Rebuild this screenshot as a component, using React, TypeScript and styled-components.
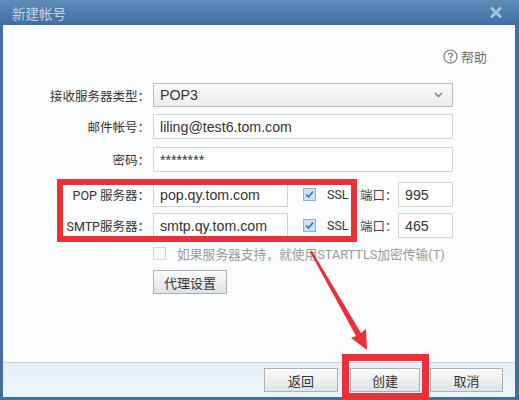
import * as React from "react";
import styled, {createGlobalStyle} from "styled-components";

const GlobalStyle = createGlobalStyle`
  html, body {
    margin: 0;
    padding: 0;
    background: #3f6d9b;
  }
  body {
    font-family: Roboto, "Noto Sans CJK SC", sans-serif;
  }
`;

const Window = styled.div`
  position: relative;
  width: 519px;
  height: 400px;
  overflow: hidden;
  display: flex;
  flex-direction: column;
  padding: 0 4px 3px 3px;
  box-sizing: border-box;
  background: #41709f;
`;

const TitleBar = styled.div`
  flex: 0 0 25px;
  margin: 0 -4px 0 -3px;
  padding: 0 17px 0 12px;
  display: flex;
  align-items: center;
  justify-content: space-between;
  background: linear-gradient(#5f8dba, #3f6f9f);
`;

const Title = styled.div`
  font-size: 13.5px;
  color: #c3d2e0;
`;

const Body = styled.div`
  flex: 1;
  min-height: 0;
  display: flex;
  flex-direction: column;
  background: #fbfcfe;
`;

const Content = styled.div`
  flex: 1;
  min-height: 0;
  padding-top: 22px;
`;

const HelpRow = styled.div`
  display: flex;
  justify-content: flex-end;
  align-items: center;
  gap: 3px;
  padding-right: 28px;
  height: 18px;
  font-size: 13px;
  color: #6e6e6e;
`;

const Form = styled.div`
  margin-top: 14px;
  display: flex;
  flex-direction: column;
`;

const Row = styled.div<{$h: number}>`
  display: flex;
  align-items: center;
  height: ${p => p.$h}px;
`;

const Label = styled.div`
  width: 147px;
  flex: none;
  text-align: right;
  font-size: 12.5px;
  color: #333;
  white-space: nowrap;
`;

const Input = styled.div<{$w?: number}>`
  box-sizing: border-box;
  width: ${p => (p.$w ? `${p.$w}px` : "300px")};
  flex: none;
  height: 25px;
  margin-left: 3px;
  padding-left: 6px;
  display: flex;
  align-items: center;
  background: #fff;
  border: 1px solid #d0d3d5;
  font-family: "Liberation Sans", "Noto Sans CJK SC", sans-serif;
  font-size: 14.2px;
  color: #333;
`;

const PortInput = styled(Input)`
  margin-left: 0;
  width: 55px;
`;

const Select = styled(Input)`
  justify-content: space-between;
  height: 24px;
  padding-right: 9px;
  border-color: #b9bcbe;
  background: linear-gradient(#fbfbfb, #ececec);
`;

const Ssl = styled.div`
  display: flex;
  align-items: center;
  margin-left: 15px;
  width: 57px;
  gap: 11px;
  font-size: 12.5px;
  color: #333;
`;

const CheckBox = styled.span<{$off?: boolean}>`
  box-sizing: border-box;
  width: 13px;
  height: 13px;
  flex: none;
  display: inline-flex;
  align-items: center;
  justify-content: center;
  border: 1px solid ${p => (p.$off ? "#d4d4d4" : "#8fb0cf")};
  background: ${p => (p.$off ? "#fbfbfb" : "#cfe2f3")};
`;

const PortLabel = styled.div`
  width: 38px;
  font-size: 12.5px;
  color: #444;
  white-space: nowrap;
`;

const StartTls = styled.div`
  display: flex;
  align-items: center;
  gap: 11px;
  margin-left: 150px;
  font-size: 12.75px;
  color: #9a9a9a;
  white-space: nowrap;
`;

const ButtonBase = styled.div<{$w: number}>`
  box-sizing: border-box;
  width: ${p => p.$w}px;
  height: 24px;
  display: flex;
  align-items: center;
  justify-content: center;
  border: 1px solid #a9b0b6;
  background: linear-gradient(#fbfbfb, #dfe3e6);
  font-size: 13px;
  color: #333;
`;

const ProxyRow = styled.div`
  margin: 3px 0 0 150px;
`;

const Footer = styled.div`
  flex: 0 0 35px;
  box-sizing: border-box;
  display: flex;
  justify-content: flex-end;
  align-items: center;
  padding-right: 12px;
  background: linear-gradient(#e4eff8, #f0f5fa);
  border-top: 1px solid #c9ced3;
`;

const FooterButton = styled(ButtonBase)<{$gap?: number}>`
  margin-left: ${p => p.$gap || 0}px;
`;

// red annotations drawn over the dialog
const RedBox = styled.div<{$x: number; $y: number; $w: number; $h: number; $b: number}>`
  position: absolute;
  left: ${p => p.$x}px;
  top: ${p => p.$y}px;
  width: ${p => p.$w}px;
  height: ${p => p.$h}px;
  box-sizing: border-box;
  border: ${p => p.$b}px solid #ec3038;
  pointer-events: none;
`;

const Overlay = styled.svg`
  position: absolute;
  left: 0;
  top: 0;
`;

const Check = () => (
  <svg width="11" height="11" viewBox="0 0 11 11">
    <path d="M2 5.5 L4.5 8 L9 2.5" fill="none" stroke="#3f78b0" strokeWidth="1.7" />
  </svg>
);

const App = () => {
  return (
    <>
      <GlobalStyle />
      <Window>
        <TitleBar>
          <Title>新建帐号</Title>
          <svg width="12" height="11" viewBox="0 0 12 11">
            <path d="M1 0.5 L11 10.5 M11 0.5 L1 10.5" stroke="#a9c4de" strokeWidth="2.6" />
          </svg>
        </TitleBar>
        <Body>
          <Content>
            <HelpRow>
              <svg width="15" height="15" viewBox="0 0 16 16">
                <circle cx="8" cy="8" r="7" fill="none" stroke="#777" strokeWidth="1.2" />
                <path d="M5.9 6.2 C6 3.8 10.2 3.9 10.1 6.2 C10 7.8 8 7.7 8 9.6" fill="none" stroke="#777" strokeWidth="1.4" />
                <circle cx="8" cy="11.8" r="0.9" fill="#777" />
              </svg>
              帮助
            </HelpRow>
            <Form>
              <Row $h={32}>
                <Label>接收服务器类型：</Label>
                <Select>
                  POP3
                  <svg width="9" height="6" viewBox="0 0 9 6">
                    <path d="M1 1 L4.5 4.5 L8 1" fill="none" stroke="#777" strokeWidth="1.4" />
                  </svg>
                </Select>
              </Row>
              <Row $h={31}>
                <Label>邮件帐号：</Label>
                <Input>liling@test6.tom.com</Input>
              </Row>
              <Row $h={35}>
                <Label>密码：</Label>
                <Input>********</Input>
              </Row>
              <Row $h={35}>
                <Label>POP 服务器：</Label>
                <Input $w={135}>pop.qy.tom.com</Input>
                <Ssl>
                  <CheckBox><Check /></CheckBox>
                  SSL
                </Ssl>
                <PortLabel>端口：</PortLabel>
                <PortInput>995</PortInput>
              </Row>
              <Row $h={27}>
                <Label>SMTP服务器：</Label>
                <Input $w={135}>smtp.qy.tom.com</Input>
                <Ssl>
                  <CheckBox><Check /></CheckBox>
                  SSL
                </Ssl>
                <PortLabel>端口：</PortLabel>
                <PortInput>465</PortInput>
              </Row>
              <Row $h={28}>
                <StartTls>
                  <CheckBox $off />
                  如果服务器支持，就使用STARTTLS加密传输(T)
                </StartTls>
              </Row>
              <ProxyRow>
                <ButtonBase $w={74}>代理设置</ButtonBase>
              </ProxyRow>
            </Form>
          </Content>
          <Footer>
            <FooterButton $w={74}>返回</FooterButton>
            <FooterButton $w={70} $gap={12}>创建</FooterButton>
            <FooterButton $w={73} $gap={10}>取消</FooterButton>
          </Footer>
        </Body>
        <RedBox $x={57} $y={179} $w={300} $h={63} $b={6} />
        <RedBox $x={342} $y={354} $w={87} $h={46} $b={7} />
        <Overlay width="519" height="400" viewBox="0 0 519 400">
          <polygon points="310,252 312,251 361,333 366,329 367,350 351,338 356,336" fill="#ec3038" />
        </Overlay>
      </Window>
    </>
  );
};

export default App;
